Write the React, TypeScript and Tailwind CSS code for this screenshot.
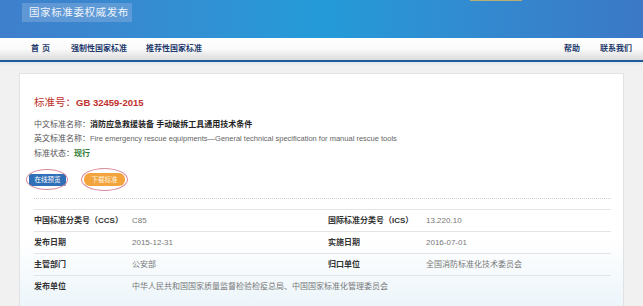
import React from 'react';

const font = { fontFamily: '"Liberation Sans", "Noto Sans CJK SC", sans-serif' };

const rows: { l1: string; v1: string; l2?: string; v2?: string }[] = [
  { l1: '中国标准分类号（CCS）', v1: 'C85', l2: '国际标准分类号（ICS）', v2: '13.220.10' },
  { l1: '发布日期', v1: '2015-12-31', l2: '实施日期', v2: '2016-07-01' },
  { l1: '主管部门', v1: '公安部', l2: '归口单位', v2: '全国消防标准化技术委员会' },
  { l1: '发布单位', v1: '中华人民共和国国家质量监督检验检疫总局、中国国家标准化管理委员会' },
];

export default function App() {
  return (
    <div className="w-[643px] h-[306px] overflow-hidden bg-[#f1f1f1]" style={font}>
      {/* header */}
      <div className="relative h-[38px] pt-[3px] bg-gradient-to-r from-[#3f7fcb] via-[#239bd8] to-[#3b78c6]">
        <div className="absolute left-[470px] top-0 h-[1px] w-[52px] bg-[#d9b65c]/80" />
        <div className="relative ml-[22px] flex h-[19px] w-[110px] items-center bg-[#7ca9dc]/55 pl-[7px] text-[10.5px] tracking-[0.6px] text-[#eef3fa]">
          国家标准委权威发布
        </div>
      </div>
      {/* nav */}
      <div className="flex h-[22px] items-center bg-gradient-to-b from-white via-[#fafafa] to-[#dcdcdc] text-[8px] font-bold text-[#1e3a6c]">
        <span className="ml-[31px] tracking-[3px]">首页</span>
        <span className="ml-[18px]">强制性国家标准</span>
        <span className="ml-[19px]">推荐性国家标准</span>
        <span className="ml-auto">帮助</span>
        <span className="ml-[20px] mr-[11px]">联系我们</span>
      </div>
      <div className="h-[2px] bg-[#1d5b9b]" />
      <div className="h-[4px] bg-gradient-to-b from-[#e3e8ee] to-[#f1f1f1]" />
      {/* main */}
      <div className="px-[19px] pt-[7px]">
        <div className="h-[240px] border border-[#e2e2e2] bg-gradient-to-b from-white from-[70%] to-[#eaf4fa] pl-[14px] pr-[12px] pt-[20px]">
          <div className="flex items-baseline leading-[16px] font-bold text-[#c0302b]">
            <span className="text-[10.5px] font-normal">标准号：</span>
            <span className="text-[9.5px]">GB 32459-2015</span>
          </div>
          <div className="mt-[7px] text-[8px] leading-[14px] text-[#555]">
            中文标准名称：<span className="font-bold text-[#222]">消防应急救援装备 手动破拆工具通用技术条件</span>
          </div>
          <div className="text-[7.5px] leading-[14px] text-[#666]">
            <span className="text-[8px] text-[#555]">英文标准名称：</span>Fire emergency rescue equipments—General technical specification for manual rescue tools
          </div>
          <div className="mt-[1px] text-[8px] leading-[14px] text-[#555]">
            标准状态：<span className="font-bold text-[#2f7d32]">现行</span>
          </div>
          <div className="mt-[12px] ml-[-5px] flex items-center gap-[18px]">
            <div className="relative">
              <div className="flex h-[12px] w-[37px] items-center justify-center rounded-[2px] bg-[#2f6fb5] text-[6.5px] text-white">在线预览</div>
              <div className="absolute left-[-3px] top-[-5px] h-[21px] w-[42px] rounded-[50%] border border-[#d98a9a]" />
            </div>
            <div className="relative">
              <div className="flex h-[13px] w-[41px] items-center justify-center rounded-[6px] bg-[#f3a43c] text-[6.5px] text-[#fff4e0]">下载标准</div>
              <div className="absolute left-[-3px] top-[-5px] h-[23px] w-[47px] rounded-[50%] border border-[#d98a9a]" />
            </div>
          </div>
          <div className="mt-[12px] border-t border-dotted border-[#cfcfcf]" />
          <div className="mt-[10px]">
            {rows.map((r, i) => (
              <div
                key={i}
                className="grid h-[22px] grid-cols-[98px_196px_98px_1fr] items-center border-t border-[#e4e4e4] text-[8px]"
              >
                <span className="font-bold text-[#333]">{r.l1}</span>
                {r.l2 ? (
                  <>
                    <span className="text-[#777]">{r.v1}</span>
                    <span className="font-bold text-[#333]">{r.l2}</span>
                    <span className="text-[#777]">{r.v2}</span>
                  </>
                ) : (
                  <span className="col-span-3 text-[#777]">{r.v1}</span>
                )}
              </div>
            ))}
          </div>
        </div>
      </div>
    </div>
  );
}
